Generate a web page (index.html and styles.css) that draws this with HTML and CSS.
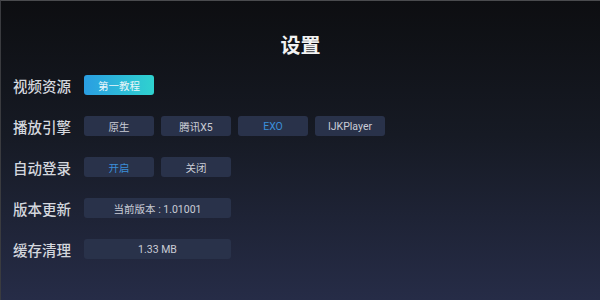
FILE: index.html
```html
<!DOCTYPE html>
<html lang="zh-CN">
<head>
    <meta charset="UTF-8">
    <title>设置</title>
    <link rel="stylesheet" href="styles.css">
</head>
<body>
    <div class="settings">
        <h1 class="title">设置</h1>

        <div class="row">
            <span class="label">视频资源</span>
            <div class="options">
                <button class="btn primary">第一教程</button>
            </div>
        </div>

        <div class="row">
            <span class="label">播放引擎</span>
            <div class="options">
                <button class="btn">原生</button>
                <button class="btn">腾讯X5</button>
                <button class="btn active">EXO</button>
                <button class="btn">IJKPlayer</button>
            </div>
        </div>

        <div class="row">
            <span class="label">自动登录</span>
            <div class="options">
                <button class="btn active">开启</button>
                <button class="btn">关闭</button>
            </div>
        </div>

        <div class="row">
            <span class="label">版本更新</span>
            <div class="options">
                <button class="btn wide">当前版本 : 1.01001</button>
            </div>
        </div>

        <div class="row">
            <span class="label">缓存清理</span>
            <div class="options">
                <button class="btn wide">1.33 MB</button>
            </div>
        </div>
    </div>
</body>
</html>
```

FILE: styles.css
```css
* {
    margin: 0;
    padding: 0;
    box-sizing: border-box;
}

html, body {
    height: 100%;
}

body {
    font-family: Roboto, "Noto Sans CJK SC", sans-serif;
    background: linear-gradient(180deg, #0d0e11 0%, #161a24 45%, #262c47 100%);
    color: #d2d5dc;
    border-top: 1px solid #4a4b4e;
    border-left: 1px solid #3a3b3f;
    overflow: hidden;
}

.settings {
    padding: 33px 0 0 12px;
}

.title {
    text-align: center;
    font-size: 20px;
    font-weight: 700;
    color: #f2f2f2;
    line-height: 24px;
    margin-bottom: 17px;
    padding-right: 12px;
}

.row {
    display: flex;
    align-items: center;
    height: 20px;
    margin-bottom: 21px;
}

.label {
    width: 71px;
    font-size: 14.5px;
    font-weight: 500;
    color: #d4d7de;
}

.options {
    display: flex;
    gap: 7px;
}

.btn {
    width: 70px;
    height: 20px;
    border: none;
    border-radius: 3px;
    background-color: #29324a;
    color: #c9cdd6;
    font-family: Roboto, "Noto Sans CJK SC", sans-serif;
    font-size: 10.5px;
}

.btn.wide {
    width: 147px;
}

.btn.active {
    color: #3b8fd9;
}

.btn.primary {
    background: linear-gradient(90deg, #2a9ee2 0%, #2fd2cf 100%);
    color: #e8f6fa;
}
```
